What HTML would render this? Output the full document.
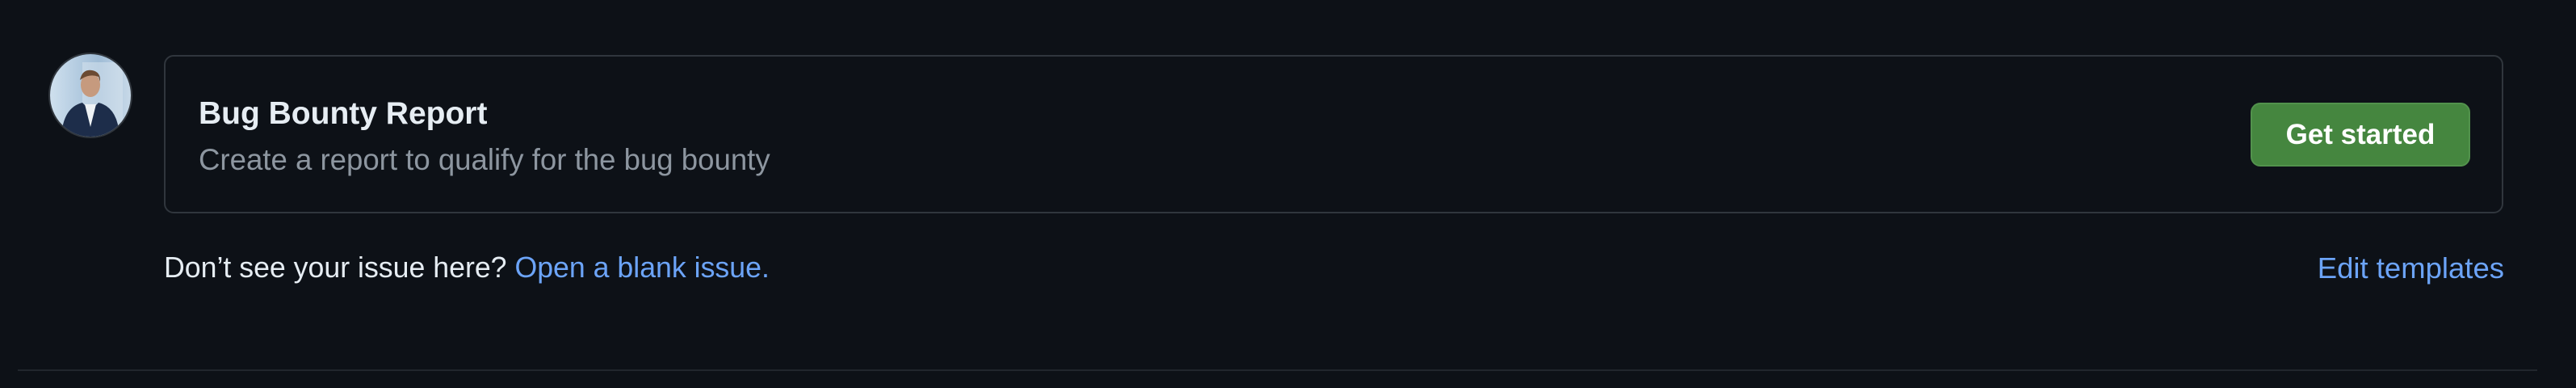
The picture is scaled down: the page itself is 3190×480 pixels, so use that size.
<!DOCTYPE html>
<html><head><meta charset="utf-8"><style>
html,body{margin:0;padding:0;background:#0d1117;width:3190px;height:480px;overflow:hidden;font-family:"Liberation Sans",sans-serif}
.av{position:absolute;left:62px;top:67px;width:100px;height:102px;border-radius:50%;overflow:hidden;box-shadow:0 0 0 2px #30363d;background:linear-gradient(90deg,#cfe0ee,#9fbcd6 60%,#c8d9e8)}
.box{position:absolute;left:203px;top:68px;width:2897px;height:196px;border:2px solid #30363d;border-radius:12px;box-sizing:border-box}
.t{position:absolute;left:246px;top:119px;font-size:39px;line-height:44px;font-weight:bold;color:#e6edf3;white-space:nowrap}
.s{position:absolute;left:246px;top:177px;font-size:36.6px;line-height:41px;color:#8d96a0;white-space:nowrap}
.btn{position:absolute;left:2787px;top:127px;width:272px;height:79px;background:#45863f;border:2px solid #52924c;box-sizing:border-box;border-radius:12px;color:#fff;font-size:35px;font-weight:bold;text-align:center;line-height:75px}
.f{position:absolute;left:203px;top:311px;font-size:35.7px;line-height:41px;color:#e6edf3;white-space:nowrap}
.f a,.e{color:#6ca4f8;text-decoration:none}
.e{position:absolute;right:89px;top:311px;font-size:36.5px;line-height:41px;white-space:nowrap}
.line{position:absolute;left:22px;top:457px;width:3120px;height:2px;background:#21262d}
</style></head><body>
<div class="av"><svg width="100" height="102" viewBox="0 0 100 102">
<rect x="40" y="10" width="50" height="92" fill="#d9e6f0" opacity=".5"/>
<ellipse cx="50" cy="38" rx="12" ry="15" fill="#c69a7e"/>
<path d="M37 32 Q40 18 52 20 Q63 22 62 34 L60 28 Q50 24 40 30Z" fill="#6b4a32"/>
<path d="M14 102 Q16 66 40 60 L50 70 L60 60 Q84 66 86 102Z" fill="#1d2d4a"/>
<path d="M43 62 L50 90 L57 62Z" fill="#eef2f5"/>
</svg></div>
<div class="box"></div>
<div class="t">Bug Bounty Report</div>
<div class="s">Create a report to qualify for the bug bounty</div>
<div class="btn">Get started</div>
<div class="f">Don’t see your issue here? <a>Open a blank issue.</a></div>
<a class="e">Edit templates</a>
<div class="line"></div>
</body></html>
